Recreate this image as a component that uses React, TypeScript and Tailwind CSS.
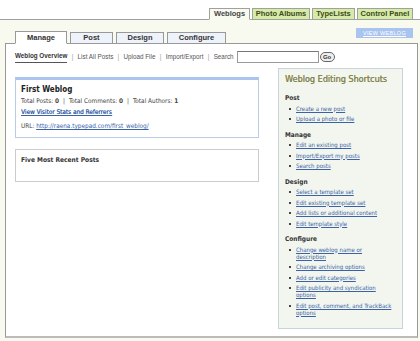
import React from "react";

const topTabs = [
  { label: "Weblogs", w: "w-[41px]" },
  { label: "Photo Albums", w: "w-[58px]" },
  { label: "TypeLists", w: "w-[43px]" },
  { label: "Control Panel", w: "w-[56px]" },
];
const subTabs = [
  { label: "Manage", w: "w-[52px]" },
  { label: "Post", w: "w-[43px]" },
  { label: "Design", w: "w-[48px]" },
  { label: "Configure", w: "w-[59px]" },
];

const shortcuts: { title: string; items: string[][] }[] = [
  { title: "Post", items: [["Create a new post"], ["Upload a photo or file"]] },
  { title: "Manage", items: [["Edit an existing post"], ["Import/Export my posts"], ["Search posts"]] },
  {
    title: "Design",
    items: [["Select a template set"], ["Edit existing template set"], ["Add lists or additional content"], ["Edit template style"]],
  },
  {
    title: "Configure",
    items: [
      ["Change weblog name or", "description"],
      ["Change archiving options"],
      ["Add or edit categories"],
      ["Edit publicity and syndication", "options"],
      ["Edit post, comment, and TrackBack", "options"],
    ],
  },
];

const navLinks = ["List All Posts", "Upload File", "Import/Export"];

const C = "font-['DejaVu_Sans_Condensed','Liberation_Sans',sans-serif]";

export default function App() {
  return (
    <div className="w-[420px] h-[341px] overflow-hidden bg-[#f8faf0] text-[#333] font-['Liberation_Sans',Arial,sans-serif]">
      {/* top tabs */}
      <div className="h-[20px] bg-white border-b border-[#a0a0a0] flex justify-end items-end gap-[2px] pr-[7px]">
        {topTabs.map((t, i) => (
          <div
            key={t.label}
            className={`${t.w} h-[12px] -mb-px border border-[#a0a0a0] flex items-center justify-center text-[7.5px] font-bold ${
              i === 0 ? "bg-[#f8faf0] border-b-[#f8faf0] text-[#444]" : "bg-[#d6eba6] border-b-[#a0a0a0] text-[#3a4a20]"
            }`}
          >
            {t.label}
          </div>
        ))}
      </div>

      {/* sub tabs */}
      <div className="flex items-end justify-between pl-[15px] pr-[7px] mt-[8px] h-[15px]">
        <div className="flex gap-[3px] items-end">
          {subTabs.map((t, i) => (
            <div
              key={t.label}
              className={`${t.w} h-[12px] -mb-px border border-[#999] flex items-center justify-center text-[7.5px] font-bold ${
                i === 0 ? "bg-white border-b-white h-[13px]" : "bg-[#eef2fa]"
              }`}
            >
              {t.label}
            </div>
          ))}
        </div>
        <div className="self-start w-[57px] h-[10px] bg-[#a9c4ee] flex items-center justify-center text-[5.5px] text-white underline tracking-[0.3px]">
          VIEW WEBLOG
        </div>
      </div>

      {/* content box */}
      <div className="ml-[5px] mr-[2px] h-[295px] bg-white border border-[#999] border-b-[2px] border-b-[#bbb] pl-[9px] pr-[14px]">
        <div className="flex items-center h-[24px] mt-[1px] text-[6.3px] text-[#555]">
          <span className="font-bold text-[#333] border-b border-[#555] pb-px">Weblog Overview</span>
          {navLinks.map((l) => (
            <React.Fragment key={l}>
              <span className="mx-[4.3px] text-[#999]">|</span>
              <span>{l}</span>
            </React.Fragment>
          ))}
          <span className="mx-[4.3px] text-[#999]">|</span>
          <span>Search</span>
          <div className="ml-[3px] w-[82px] h-[12px] border border-[#999] border-t-[#777] bg-white" />
          <div className="ml-px w-[15px] h-[10px] rounded-full border border-[#666] bg-[#eee] flex items-center justify-center text-[6px] font-bold text-[#333]">
            Go
          </div>
        </div>

        <div className={`flex justify-between ${C}`}>
          {/* left column */}
          <div className="w-[244px] mt-[8px] flex flex-col gap-[11px]">
            <div className="h-[61px] border border-[#b8cce8] border-t-[3px] border-t-[#a9c4ee] px-[5px] pt-[4px]">
              <div className="text-[8px] font-bold text-[#222] leading-[11px]">First Weblog</div>
              <div className="text-[6.4px] text-[#444] mt-[2px] leading-[9px]">
                Total Posts: <b>0</b>
                <span className="mx-[4px]">|</span>
                Total Comments: <b>0</b>
                <span className="mx-[4px]">|</span>
                Total Authors: <b>1</b>
              </div>
              <div className="text-[6.4px] text-[#3a62a8] underline leading-[9px] mt-[2px] [text-shadow:0.25px_0_0_#3a62a8]">
                View Visitor Stats and Referrers
              </div>
              <div className="text-[6.4px] text-[#444] leading-[9px] mt-[5px]">
                URL: <span className="text-[#3a62a8] underline">http://raena.typepad.com/first_weblog/</span>
              </div>
            </div>
            <div className="h-[33px] border border-[#ccc] px-[5px] pt-[5px]">
              <div className="text-[6.6px] font-bold text-[#333] leading-[10px]">Five Most Recent Posts</div>
            </div>
          </div>

          {/* right sidebar */}
          <div className="w-[125px] h-[261px] -mt-[1px] bg-[#f2f6ee] border border-[#c8d4dc] px-[6px] pt-[4px]">
            <div className="text-[9px] text-[#86864e] leading-[12px] [text-shadow:0.3px_0_0_#86864e]">Weblog Editing Shortcuts</div>
            <div className="mt-[9px] flex flex-col gap-[8.5px]">
              {shortcuts.map((s) => (
                <div key={s.title}>
                  <div className="text-[6.5px] font-bold text-[#333] leading-[8px]">{s.title}</div>
                  <ul className="mt-[2.5px] flex flex-col gap-[3.5px]">
                    {s.items.map((it) => (
                      <li key={it[0]} className="flex items-start pl-[4px]">
                        <span className="w-[2px] h-[2px] bg-[#444] mt-[3px] mr-[5px] shrink-0" />
                        <span className="text-[6px] text-[#3a62a8] underline leading-[7px]">
                          {it[0]}
                          {it[1] && <br />}
                          {it[1]}
                        </span>
                      </li>
                    ))}
                  </ul>
                </div>
              ))}
            </div>
          </div>
        </div>
      </div>
    </div>
  );
}
